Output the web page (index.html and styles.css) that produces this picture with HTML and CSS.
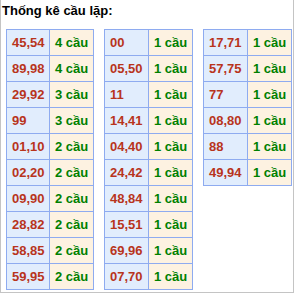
FILE: index.html
```html
<!DOCTYPE html>
<html>
<head>
<meta charset="utf-8">
<link rel="stylesheet" href="styles.css">
</head>
<body>
<div class="box">
  <div class="title">Thống kê cầu lặp:</div>
  <div class="tables">
    <div class="tbl first">
      <div class="num">45,54</div><div class="cnt">4 cầu</div>
      <div class="num">89,98</div><div class="cnt">4 cầu</div>
      <div class="num">29,92</div><div class="cnt">3 cầu</div>
      <div class="num">99</div><div class="cnt">3 cầu</div>
      <div class="num">01,10</div><div class="cnt">2 cầu</div>
      <div class="num">02,20</div><div class="cnt">2 cầu</div>
      <div class="num">09,90</div><div class="cnt">2 cầu</div>
      <div class="num">28,82</div><div class="cnt">2 cầu</div>
      <div class="num">58,85</div><div class="cnt">2 cầu</div>
      <div class="num">59,95</div><div class="cnt">2 cầu</div>
    </div>
    <div class="tbl">
      <div class="num">00</div><div class="cnt">1 cầu</div>
      <div class="num">05,50</div><div class="cnt">1 cầu</div>
      <div class="num">11</div><div class="cnt">1 cầu</div>
      <div class="num">14,41</div><div class="cnt">1 cầu</div>
      <div class="num">04,40</div><div class="cnt">1 cầu</div>
      <div class="num">24,42</div><div class="cnt">1 cầu</div>
      <div class="num">48,84</div><div class="cnt">1 cầu</div>
      <div class="num">15,51</div><div class="cnt">1 cầu</div>
      <div class="num">69,96</div><div class="cnt">1 cầu</div>
      <div class="num">07,70</div><div class="cnt">1 cầu</div>
    </div>
    <div class="tbl">
      <div class="num">17,71</div><div class="cnt">1 cầu</div>
      <div class="num">57,75</div><div class="cnt">1 cầu</div>
      <div class="num">77</div><div class="cnt">1 cầu</div>
      <div class="num">08,80</div><div class="cnt">1 cầu</div>
      <div class="num">88</div><div class="cnt">1 cầu</div>
      <div class="num">49,94</div><div class="cnt">1 cầu</div>
    </div>
  </div>
</div>
</body>
</html>
```
FILE: styles.css
```css
html, body {
  margin: 0;
  padding: 0;
  background: #fff;
}
body {
  font-family: "Liberation Sans", Arial, sans-serif;
}
.box {
  width: 292px;
  height: 292px;
  border: 1px solid #c4c4c4;
  border-top: none;
}
.title {
  font-size: 13px;
  font-weight: bold;
  color: #000;
  line-height: 20px;
  padding: 1px 0 0 1px;
  height: 20px;
  margin-bottom: 8px;
}
.tables {
  display: flex;
  align-items: flex-start;
  gap: 10px;
  padding-left: 5px;
}
.tbl {
  display: grid;
  grid-template-columns: 44px 44px;
  border-left: 1px solid #8eabf0;
  border-top: 1px solid #8eabf0;
}
.tbl.first {
  grid-template-columns: 43px 44px;
}
.num, .cnt {
  height: 25px;
  line-height: 25px;
  font-size: 13px;
  font-weight: bold;
  padding-left: 5px;
  border-right: 1px solid #8eabf0;
  border-bottom: 1px solid #8eabf0;
  white-space: nowrap;
}
.num {
  background: #e1edfd;
  color: #b8341c;
}
.cnt {
  background: #fdf2e1;
  color: #008000;
}
```
